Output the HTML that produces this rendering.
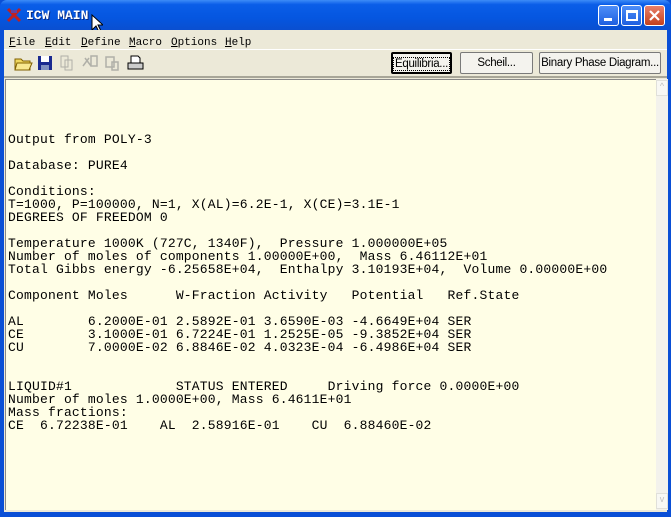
<!DOCTYPE html>
<html><head><meta charset="utf-8"><style>
*{margin:0;padding:0;box-sizing:border-box}
body{width:671px;height:517px;overflow:hidden;background:#0a4fd6;font-family:"Liberation Sans",sans-serif;position:relative}
.title{position:absolute;left:0;top:0;width:671px;height:30px;background:linear-gradient(#3d8cf7 0%,#0a5ee8 15%,#0556e0 60%,#0a4fd0 100%);border-radius:7px 7px 0 0}
.title .t{position:absolute;left:26px;top:8px;color:#fff;font:bold 13px "Liberation Mono",monospace;text-shadow:1px 1px #0a2a80}
.ico{position:absolute;left:6px;top:7px;width:16px;height:16px}
.wb{position:absolute;top:5px;width:21px;height:21px;border:1px solid #fff;border-radius:3px;background:linear-gradient(#4d8ef8,#1f5fe0)}
.wb.x{background:linear-gradient(#e9806a,#c4401c)}
.frame{position:absolute;left:4px;top:30px;width:663px;height:482px;background:#ece9d8}
.menu{position:absolute;left:4px;top:33px;height:20px;font:11px "Liberation Mono",monospace;color:#000}
.menu span{position:absolute;top:4px;white-space:nowrap}
.tb{position:absolute;top:52px;width:22px;height:22px}
.btn{position:absolute;top:52px;height:22px;background:#f4f3ee;border:1px solid #7a7a7a;border-radius:2px;font:11.5px "Liberation Sans",sans-serif;text-align:center;line-height:20px;color:#000;letter-spacing:-0.3px;white-space:nowrap;overflow:hidden}
.out{position:absolute;left:5px;top:79px;width:651px;height:431px;background:#fffee6;border-top:1px solid #888;border-left:1px solid #888}
pre{position:absolute;left:8px;top:133px;font:13px/13px "Liberation Mono",monospace;color:#000;letter-spacing:0.19px}
.sb{position:absolute;left:656px;top:79px;width:12px;height:431px;background:#f3f2ec}
</style></head><body>
<div class="title">
<svg class="ico" viewBox="0 0 16 16"><path d="M2 2l12 12M14 2L2 14" stroke="#c02020" stroke-width="3"/><path d="M5 3h6v3H5z" fill="#6040a0"/></svg>
<div class="t">ICW MAIN</div>
<svg style="position:absolute;left:91px;top:14px" width="12" height="20" viewBox="0 0 12 20"><path d="M1 1v15l4-4 3 6 2-1-3-6h5z" fill="#fff" stroke="#000"/></svg>
<div class="wb" style="left:598px"><div style="position:absolute;left:5px;top:12px;width:8px;height:3px;background:#fff"></div></div>
<div class="wb" style="left:621px"><div style="position:absolute;left:4px;top:4px;width:12px;height:11px;border:2px solid #fff;border-top-width:3px"></div></div>
<div class="wb x" style="left:644px"><svg width="19" height="19"><path d="M5 5l9 9M14 5l-9 9" stroke="#fff" stroke-width="2.2"/></svg></div>
</div>
<div class="frame"></div>
<div class="menu">
<span style="left:5px"><u>F</u>ile</span><span style="left:41px"><u>E</u>dit</span><span style="left:77px"><u>D</u>efine</span><span style="left:125px"><u>M</u>acro</span><span style="left:167px"><u>O</u>ptions</span><span style="left:221px"><u>H</u>elp</span>
</div>
<div style="position:absolute;left:4px;top:49px;width:663px;height:1px;background:#fff"></div>
<svg class="tb" style="left:12px" viewBox="0 0 22 22"><path d="M3 7h6l2 2h7v9H3z" fill="#f0d860" stroke="#806000"/><path d="M5 11h15l-3 7H3z" fill="#f8e890" stroke="#806000"/></svg>
<svg class="tb" style="left:34px" viewBox="0 0 22 22"><rect x="4" y="4" width="14" height="14" fill="#1a2a90"/><rect x="7" y="4" width="8" height="6" fill="#fff"/><rect x="7" y="13" width="8" height="5" fill="#8090c0"/></svg>
<svg class="tb" style="left:56px" viewBox="0 0 22 22"><path d="M5 4h7v11H5zM9 8h7v10H9z" fill="none" stroke="#b0b0a8"/></svg>
<svg class="tb" style="left:79px" viewBox="0 0 22 22"><path d="M4 14l6-8M12 14l-6-8M12 4h6v10h-6z" fill="none" stroke="#b0b0a8" stroke-width="1.5"/></svg>
<svg class="tb" style="left:101px" viewBox="0 0 22 22"><path d="M5 5h8v10H5zM11 10h6v8h-6z" fill="none" stroke="#b0b0a8" stroke-width="1.5"/></svg>
<svg class="tb" style="left:124px" viewBox="0 0 22 22"><path d="M7 4h7l2 2v5H7z" fill="#fff" stroke="#000"/><rect x="4" y="11" width="15" height="6" fill="#ccc" stroke="#000"/></svg>
<div class="btn" style="left:391px;width:61px;border:2px solid #000"><span style="border:1px dotted #000;padding:0 1px">Equilibria...</span></div>
<div class="btn" style="left:460px;width:73px">Scheil...</div>
<div class="btn" style="left:539px;width:122px">Binary Phase Diagram...</div>
<div style="position:absolute;left:4px;top:76px;width:663px;height:2px;background:#a8a698"></div>
<div class="out"></div>
<div class="sb"><div style="position:absolute;left:0;top:1px;width:12px;height:16px;background:#f8f8f4;border:1px solid #e0e0da;color:#c0c0c0;font-size:9px;text-align:center">^</div><div style="position:absolute;left:0;bottom:1px;width:12px;height:16px;background:#f8f8f4;border:1px solid #e0e0da;color:#c0c0c0;font-size:9px;text-align:center">v</div></div>
<pre>Output from POLY-3

Database: PURE4

Conditions:
T=1000, P=100000, N=1, X(AL)=6.2E-1, X(CE)=3.1E-1
DEGREES OF FREEDOM 0

Temperature 1000K (727C, 1340F),  Pressure 1.000000E+05
Number of moles of components 1.00000E+00,  Mass 6.46112E+01
Total Gibbs energy -6.25658E+04,  Enthalpy 3.10193E+04,  Volume 0.00000E+00

Component Moles      W-Fraction Activity   Potential   Ref.State

AL        6.2000E-01 2.5892E-01 3.6590E-03 -4.6649E+04 SER
CE        3.1000E-01 6.7224E-01 1.2525E-05 -9.3852E+04 SER
CU        7.0000E-02 6.8846E-02 4.0323E-04 -6.4986E+04 SER


LIQUID#1             STATUS ENTERED     Driving force 0.0000E+00
Number of moles 1.0000E+00, Mass 6.4611E+01
Mass fractions:
CE  6.72238E-01    AL  2.58916E-01    CU  6.88460E-02</pre>
</body></html>
